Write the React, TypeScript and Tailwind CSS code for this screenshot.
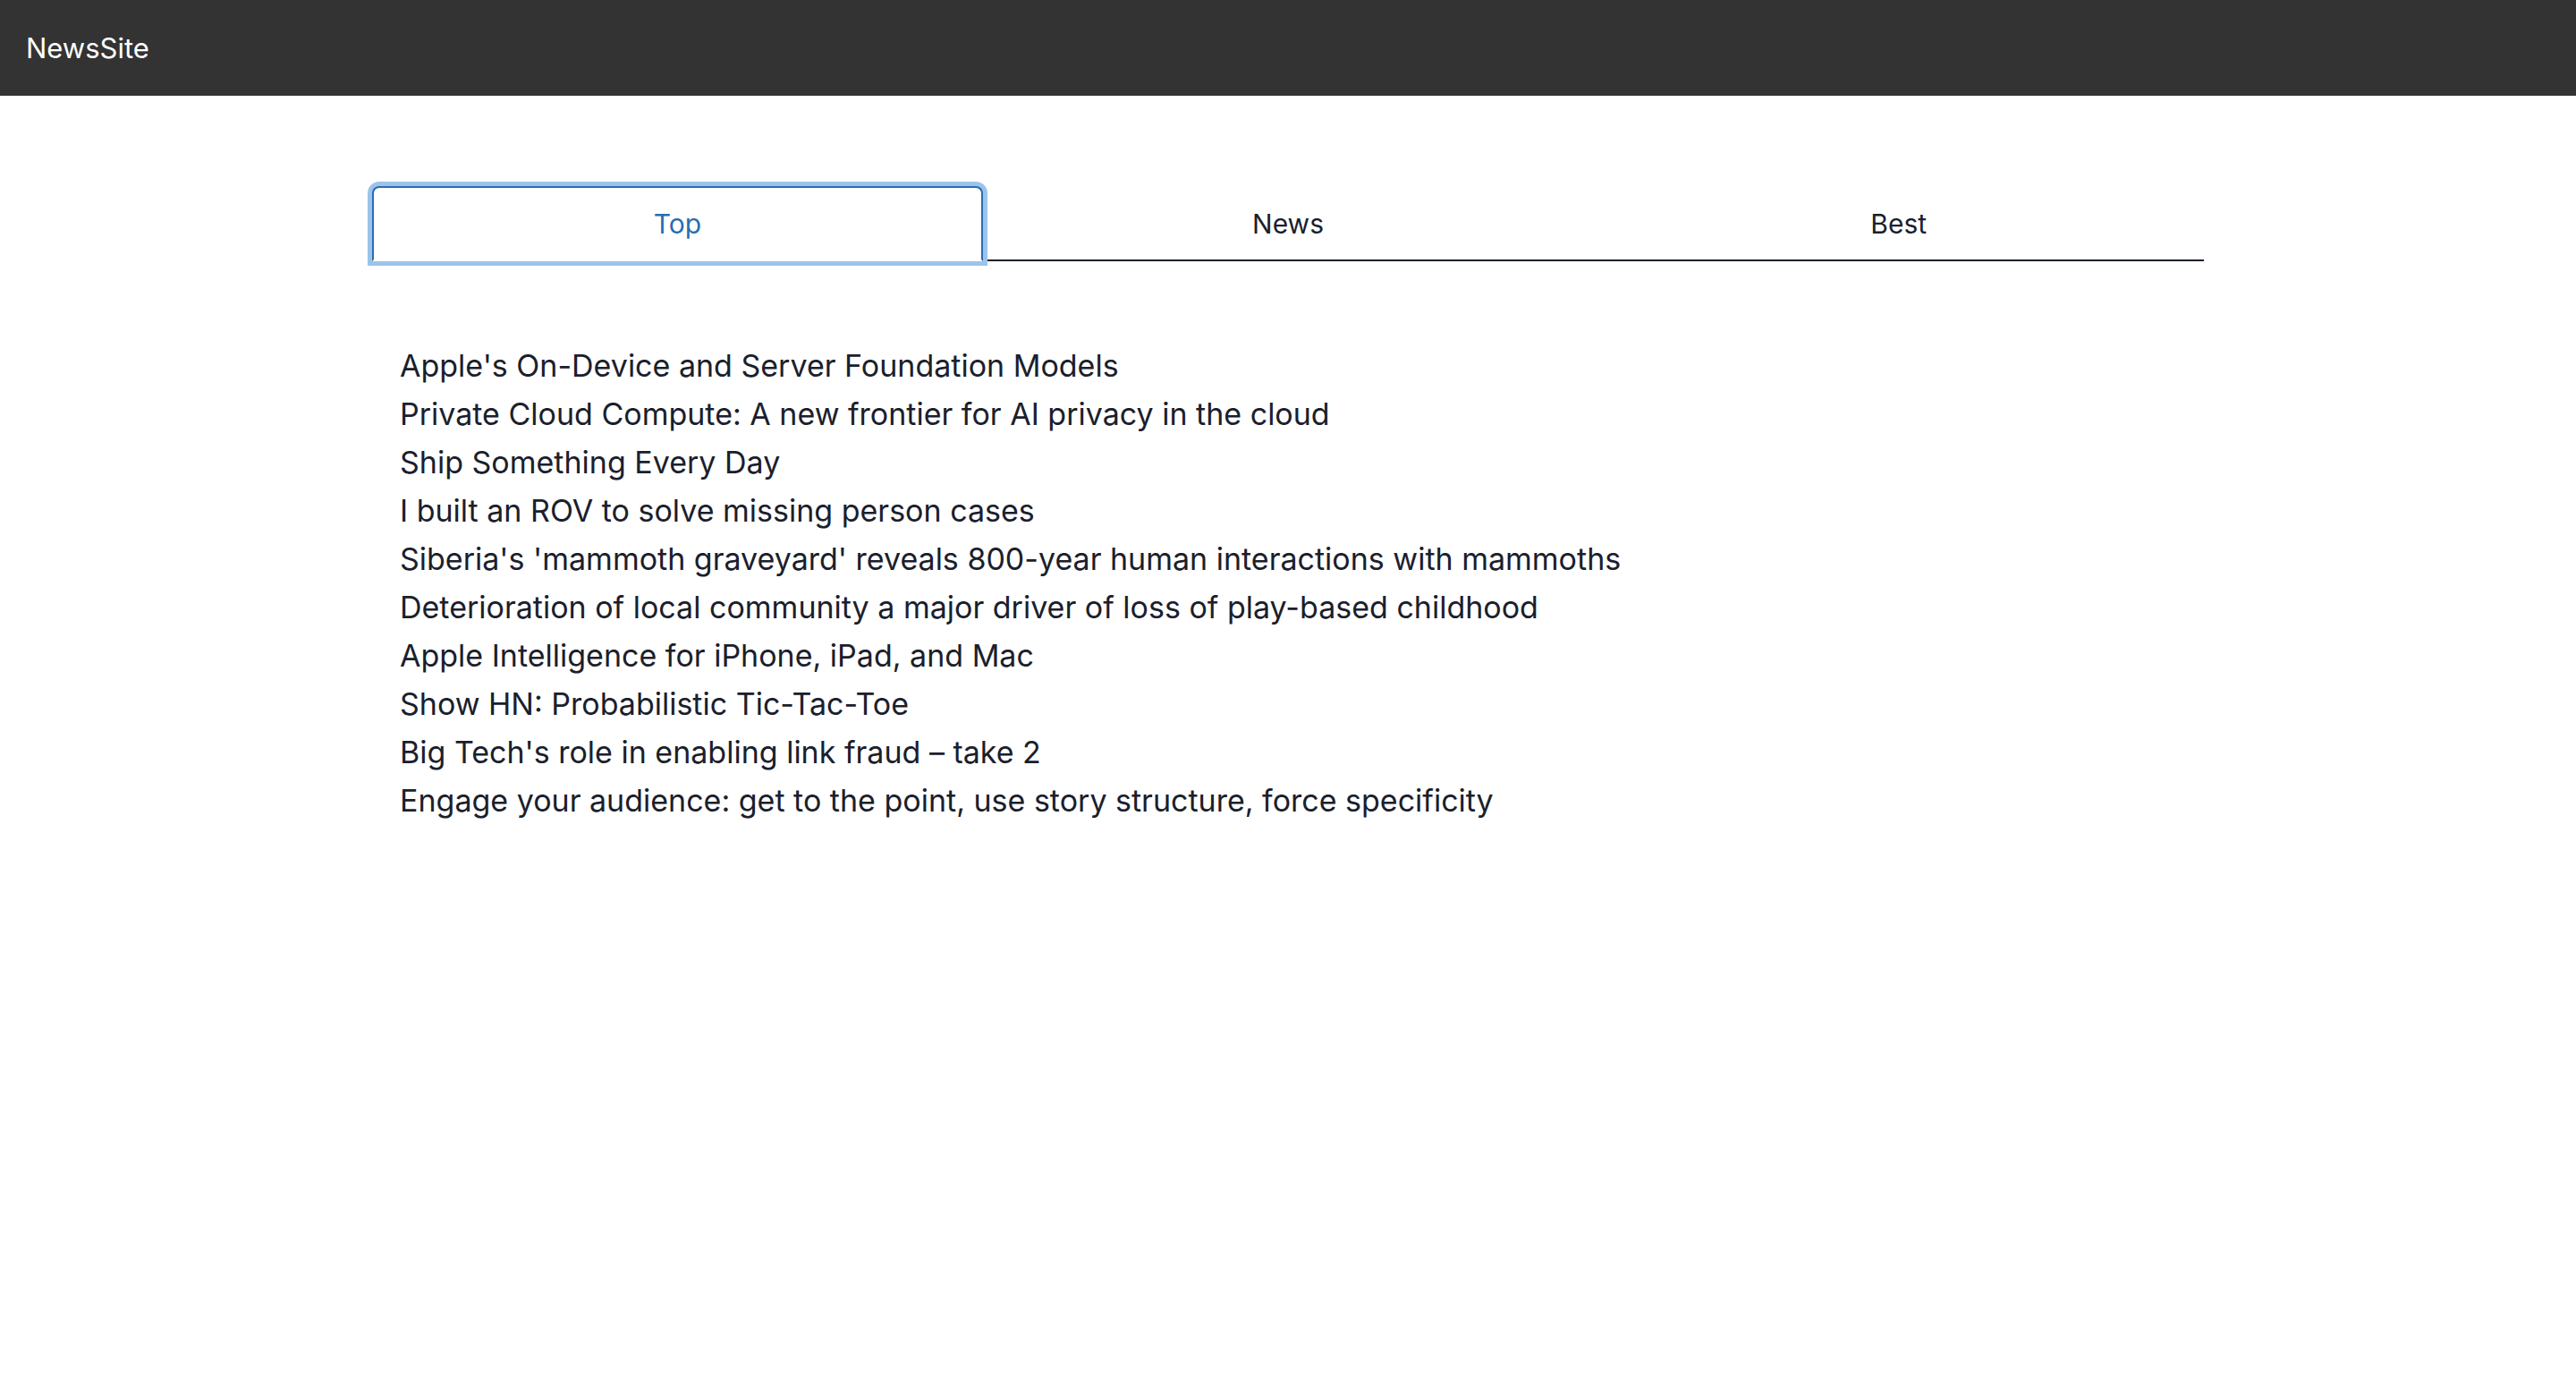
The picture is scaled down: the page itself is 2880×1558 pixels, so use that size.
import { useState } from 'react';

const TABS = ['Top', 'News', 'Best'];

const STORIES: string[] = [
  "Apple's On-Device and Server Foundation Models",
  'Private Cloud Compute: A new frontier for AI privacy in the cloud',
  'Ship Something Every Day',
  'I built an ROV to solve missing person cases',
  "Siberia's 'mammoth graveyard' reveals 800-year human interactions with mammoths",
  'Deterioration of local community a major driver of loss of play-based childhood',
  'Apple Intelligence for iPhone, iPad, and Mac',
  'Show HN: Probabilistic Tic-Tac-Toe',
  "Big Tech's role in enabling link fraud – take 2",
  'Engage your audience: get to the point, use story structure, force specificity',
];

export default function App() {
  const [active, setActive] = useState('Top');

  return (
    <div className="min-h-screen bg-white text-[#1a202c] font-['Inter',sans-serif]">
      {/* Top bar */}
      <header className="h-[107px] bg-[#333333] flex items-center pl-[29px]">
        <span className="text-white text-[31px] leading-none">NewsSite</span>
      </header>

      <main className="w-[2048px] mx-auto mt-[101px]">
        {/* Tab list */}
        <div className="flex border-b-2 border-[#1a202c]">
          {TABS.map((tab) => {
            const selected = tab === active;
            return (
              <button
                key={tab}
                onClick={() => setActive(tab)}
                className={
                  selected
                    ? 'relative flex-1 h-[84px] -mb-[2px] border-2 border-[#2b6cb0] border-b-white rounded-t-[8px] text-[#2b6cb0] text-[30px] shadow-[0_0_0_5px_#9cc3ea] z-10 bg-white'
                    : 'flex-1 h-[84px] -mb-[2px] border-2 border-transparent rounded-t-[8px] text-[#1a202c] text-[30px]'
                }
              >
                {tab}
              </button>
            );
          })}
        </div>

        {/* Story list */}
        <ul className="pt-[90px] pl-[31px]">
          {STORIES.map((title) => (
            <li key={title} className="text-[34px] leading-[54px]">
              {title}
            </li>
          ))}
        </ul>
      </main>
    </div>
  );
}
